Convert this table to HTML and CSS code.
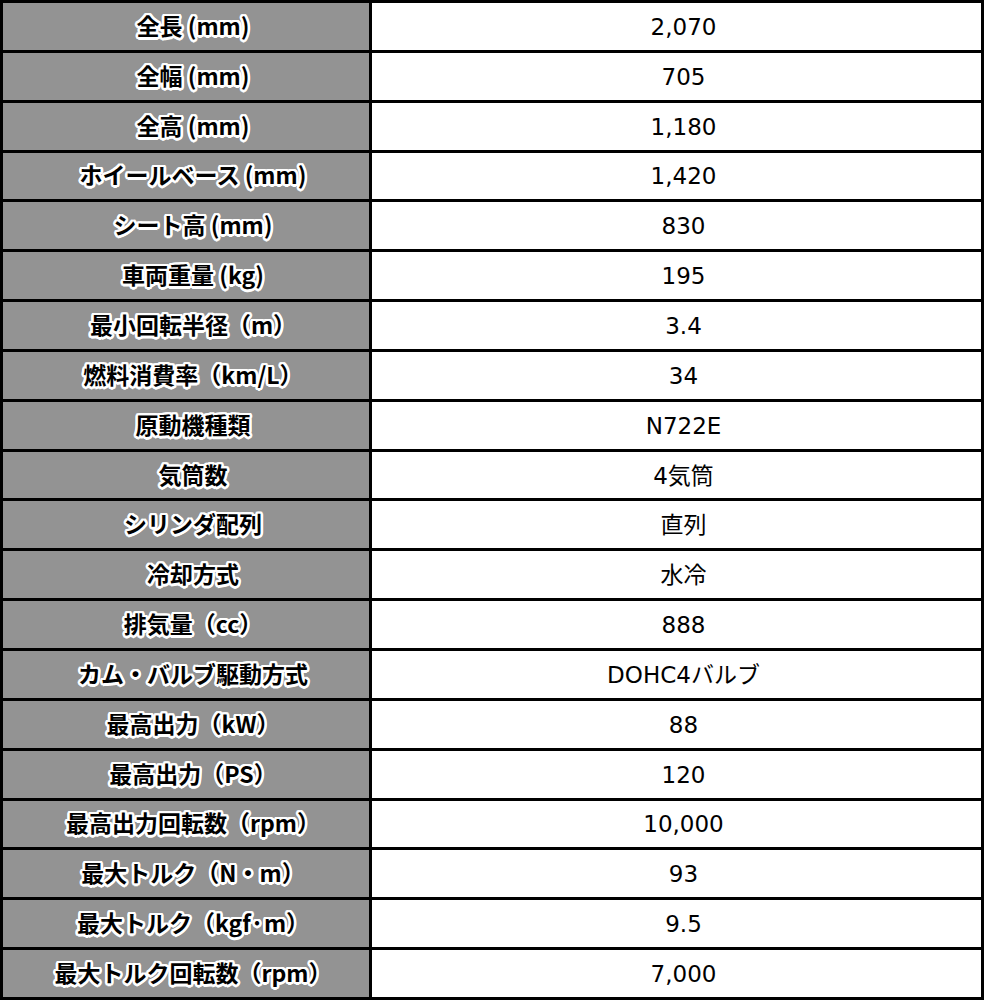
FILE: index.html
```html
<!DOCTYPE html>
<html lang="ja">
<head>
<meta charset="utf-8">
<title>スペック</title>
<link rel="stylesheet" href="styles.css">
</head>
<body>
<div class="spec">
  <div class="row"><div class="label">全長 (mm)</div><div class="value">2,070</div></div>
  <div class="row"><div class="label">全幅 (mm)</div><div class="value">705</div></div>
  <div class="row"><div class="label">全高 (mm)</div><div class="value">1,180</div></div>
  <div class="row"><div class="label">ホイールベース (mm)</div><div class="value">1,420</div></div>
  <div class="row"><div class="label">シート高 (mm)</div><div class="value">830</div></div>
  <div class="row"><div class="label">車両重量 (kg)</div><div class="value">195</div></div>
  <div class="row"><div class="label">最小回転半径（m）</div><div class="value">3.4</div></div>
  <div class="row"><div class="label">燃料消費率（km/L）</div><div class="value">34</div></div>
  <div class="row"><div class="label">原動機種類</div><div class="value">N722E</div></div>
  <div class="row"><div class="label">気筒数</div><div class="value">4気筒</div></div>
  <div class="row"><div class="label">シリンダ配列</div><div class="value">直列</div></div>
  <div class="row"><div class="label">冷却方式</div><div class="value">水冷</div></div>
  <div class="row"><div class="label">排気量（cc）</div><div class="value">888</div></div>
  <div class="row"><div class="label">カム・バルブ駆動方式</div><div class="value">DOHC4バルブ</div></div>
  <div class="row"><div class="label">最高出力（kW）</div><div class="value">88</div></div>
  <div class="row"><div class="label">最高出力（PS）</div><div class="value">120</div></div>
  <div class="row"><div class="label">最高出力回転数（rpm）</div><div class="value">10,000</div></div>
  <div class="row"><div class="label">最大トルク（N・m）</div><div class="value">93</div></div>
  <div class="row"><div class="label">最大トルク（kgf·m）</div><div class="value">9.5</div></div>
  <div class="row"><div class="label">最大トルク回転数（rpm）</div><div class="value">7,000</div></div>
</div>
</body>
</html>
```
FILE: styles.css
```css
html, body {
  margin: 0;
  padding: 0;
  background: #ffffff;
}
.spec {
  width: 984px;
  box-sizing: border-box;
  border: 3px solid #000;
  border-bottom: 0;
  display: flex;
  flex-direction: column;
}
.row {
  display: flex;
  height: 49.85px;
  box-sizing: border-box;
  border-bottom: 3px solid #000;
}
.label {
  width: 369px;
  box-sizing: border-box;
  border-right: 3px solid #000;
  background: #939393;
  display: flex;
  align-items: center;
  justify-content: center;
  padding: 0 0 2px 14px;
  line-height: 1;
  color: #000;
  font-family: "Noto Sans CJK JP", "Noto Sans", sans-serif;
  font-size: 23px;
  font-weight: 700;
  text-shadow:
    2.5px 0 0 #fff, -2.5px 0 0 #fff, 0 2.5px 0 #fff, 0 -2.5px 0 #fff,
    1.8px 1.8px 0 #fff, -1.8px 1.8px 0 #fff, 1.8px -1.8px 0 #fff, -1.8px -1.8px 0 #fff,
    2.3px 1px 0 #fff, -2.3px 1px 0 #fff, 2.3px -1px 0 #fff, -2.3px -1px 0 #fff,
    1px 2.3px 0 #fff, -1px 2.3px 0 #fff, 1px -2.3px 0 #fff, -1px -2.3px 0 #fff,
    0 0 2px #fff;
}
.value {
  flex: 1;
  display: flex;
  align-items: center;
  justify-content: center;
  padding: 2px 0 0 14px;
  line-height: 1;
  color: #000;
  background: #fff;
  font-family: "DejaVu Sans", "Noto Sans CJK JP", sans-serif;
  font-size: 23px;
}
```
